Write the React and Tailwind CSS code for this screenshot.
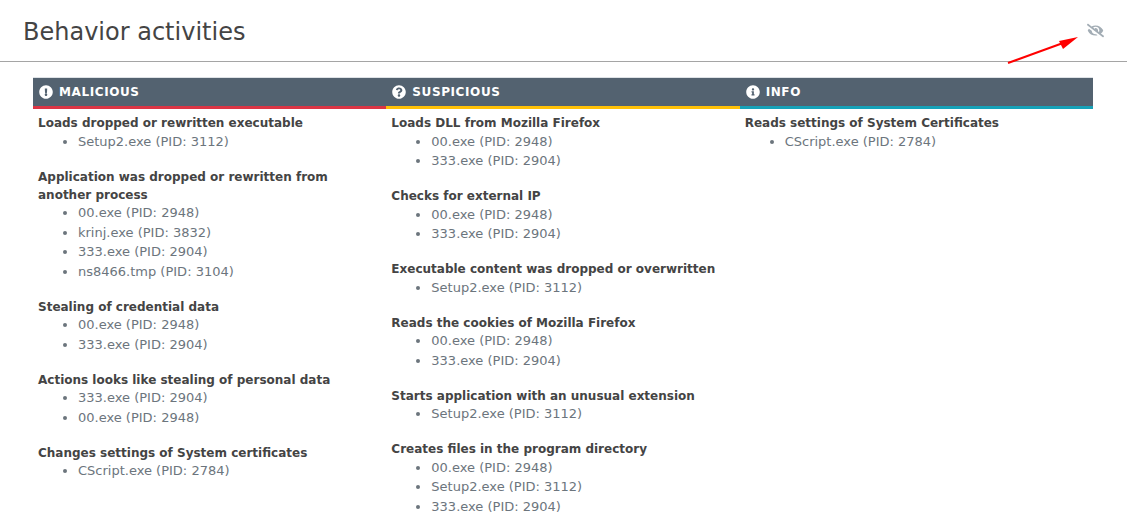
import { FaExclamationCircle, FaQuestionCircle, FaInfoCircle, FaEyeSlash } from 'react-icons/fa';

const columns = [
    {
        title: 'MALICIOUS',
        Icon: FaExclamationCircle,
        border: 'border-b-[#dc3545]',
        groups: [
            { name: 'Loads dropped or rewritten executable', items: ['Setup2.exe (PID: 3112)'] },
            {
                name: 'Application was dropped or rewritten from another process',
                items: ['00.exe (PID: 2948)', 'krinj.exe (PID: 3832)', '333.exe (PID: 2904)', 'ns8466.tmp (PID: 3104)'],
            },
            { name: 'Stealing of credential data', items: ['00.exe (PID: 2948)', '333.exe (PID: 2904)'] },
            { name: 'Actions looks like stealing of personal data', items: ['333.exe (PID: 2904)', '00.exe (PID: 2948)'] },
            { name: 'Changes settings of System certificates', items: ['CScript.exe (PID: 2784)'] },
        ],
    },
    {
        title: 'SUSPICIOUS',
        Icon: FaQuestionCircle,
        border: 'border-b-[#ffc107]',
        groups: [
            { name: 'Loads DLL from Mozilla Firefox', items: ['00.exe (PID: 2948)', '333.exe (PID: 2904)'] },
            { name: 'Checks for external IP', items: ['00.exe (PID: 2948)', '333.exe (PID: 2904)'] },
            { name: 'Executable content was dropped or overwritten', items: ['Setup2.exe (PID: 3112)'] },
            { name: 'Reads the cookies of Mozilla Firefox', items: ['00.exe (PID: 2948)', '333.exe (PID: 2904)'] },
            { name: 'Starts application with an unusual extension', items: ['Setup2.exe (PID: 3112)'] },
            {
                name: 'Creates files in the program directory',
                items: ['00.exe (PID: 2948)', 'Setup2.exe (PID: 3112)', '333.exe (PID: 2904)'],
            },
        ],
    },
    {
        title: 'INFO',
        Icon: FaInfoCircle,
        border: 'border-b-[#17a2b8]',
        groups: [{ name: 'Reads settings of System Certificates', items: ['CScript.exe (PID: 2784)'] }],
    },
];

const Column = ({ column }) => {
    const { title, Icon, border, groups } = column;
    return (
        <div className="w-1/3">
            <div className={`flex items-center gap-[6px] h-[32px] pl-[6px] bg-[#536270] border-t border-t-[#dee2e6] border-b-[3px] ${border} text-white`}>
                <Icon className="w-[14px] h-[14px]" />
                <span className="text-[12px] font-bold tracking-[0.6px]">{title}</span>
            </div>
            <div className="pt-[5px] pl-[5px] pr-[15px]">
                {groups.map((group) => (
                    <div key={group.name} className="mb-[16.25px]">
                        <div className="text-[12px] leading-[18px] font-bold text-[#444444]">{group.name}</div>
                        <ul className="-mt-[0.25px] pl-[40px] list-disc text-[13px] leading-[19.5px] text-[#6c757d]">
                            {group.items.map((item) => (
                                <li key={item}>{item}</li>
                            ))}
                        </ul>
                    </div>
                ))}
            </div>
        </div>
    );
};

export default function App() {
    return (
        <div className="relative h-[522px] overflow-hidden bg-white font-['DejaVu_Sans',sans-serif]">
            <div className="flex items-center justify-between h-[62px] px-[23px] border-b border-[#a5a5a5]">
                <h2 className="mt-[3px] text-[24px] leading-[29px] text-[#444444]">Behavior activities</h2>
                <FaEyeSlash className="w-[17px] h-[17px] text-[#a3adb5]" />
            </div>
            <div className="flex mt-[15px] mx-[33px] w-[1060px]">
                {columns.map((column) => (
                    <Column key={column.title} column={column} />
                ))}
            </div>
            {/* red annotation arrow */}
            <svg className="absolute left-[1000px] top-[20px]" width="90" height="50" viewBox="0 0 90 50">
                <line x1="8" y1="43" x2="63" y2="23" stroke="#ff0000" strokeWidth="2" />
                <polygon points="78,17 59,21 63,29" fill="#ff0000" />
            </svg>
        </div>
    );
}
